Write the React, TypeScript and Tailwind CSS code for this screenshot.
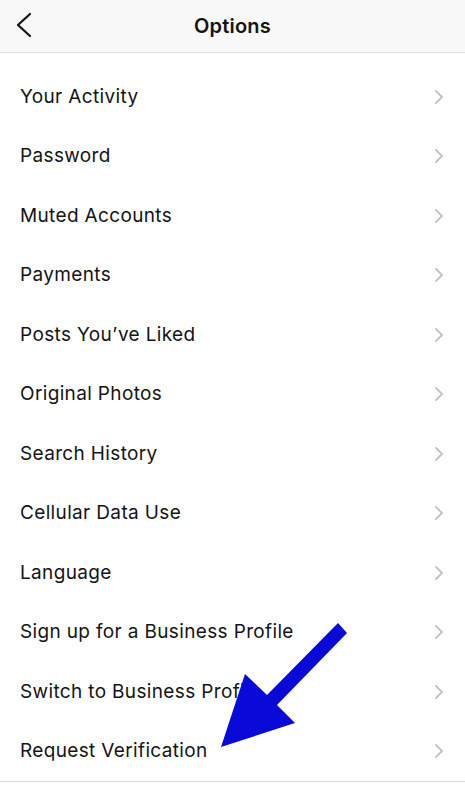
const items = [
  "Your Activity",
  "Password",
  "Muted Accounts",
  "Payments",
  "Posts You’ve Liked",
  "Original Photos",
  "Search History",
  "Cellular Data Use",
  "Language",
  "Sign up for a Business Profile",
  "Switch to Business Profile",
  "Request Verification",
]

function Chevron() {
  return (
    <svg width="10" height="14" viewBox="0 0 10 14" fill="none">
      <polyline points="2,1 8,7 2,13" stroke="#c2c2c2" strokeWidth="1.8" strokeLinecap="round" strokeLinejoin="round" />
    </svg>
  )
}

export default function App() {
  return (
    <div
      className="relative min-h-screen bg-white text-[#141414]"
      style={{ fontFamily: "Inter, 'Noto Sans', sans-serif" }}
    >
      {/* Header */}
      <header className="relative flex h-[53px] items-center justify-center border-b border-[#e2e2e2] bg-[#f8f8f8]">
        <svg className="absolute left-[15px] top-[12px]" width="18" height="26" viewBox="0 0 18 26" fill="none">
          <polyline points="15,2 3,13 15,24" stroke="#111" strokeWidth="2.2" strokeLinecap="round" strokeLinejoin="round" />
        </svg>
        <h1 className="text-[20px] font-semibold tracking-[0.2px]">Options</h1>
      </header>

      {/* Options list */}
      <ul className="pt-[14px] border-b border-[#d8d8d8]">
        {items.map((label) => (
          <li key={label} className="flex h-[59.5px] items-center justify-between pl-[20px] pr-[21px]">
            <span className="text-[19px] tracking-[0.35px]">{label}</span>
            <Chevron />
          </li>
        ))}
      </ul>

      {/* Annotation arrow */}
      <svg className="pointer-events-none absolute left-0 top-0" width="465" height="800" viewBox="0 0 465 800">
        <polygon
          points="338,623 347,633 277,705 295,723 221,747 245,674 267,695"
          fill="#0a0ad8"
        />
      </svg>
    </div>
  )
}
